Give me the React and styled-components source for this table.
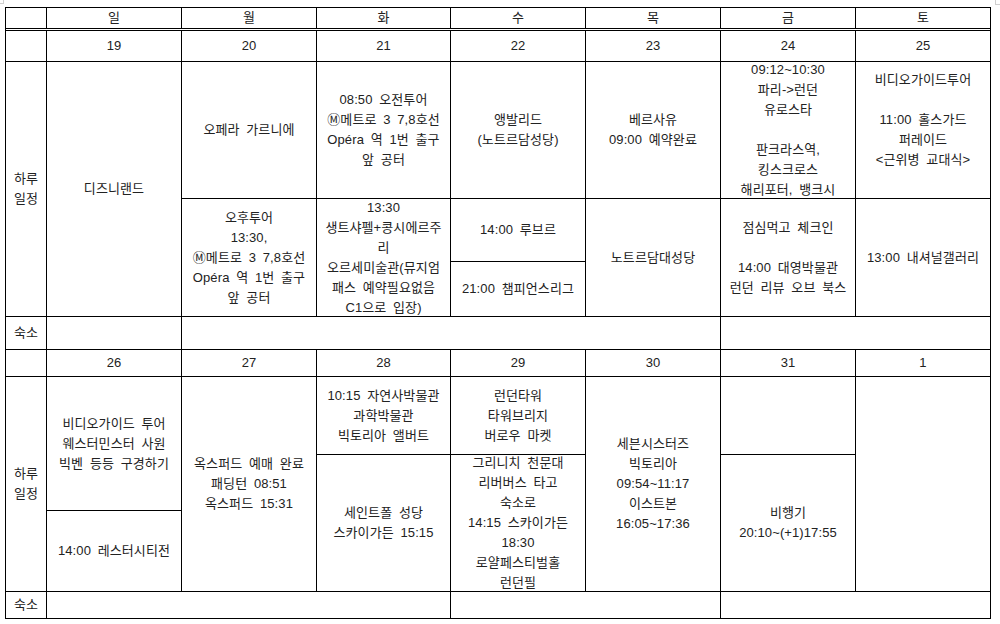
import React from "react";
import styled, { createGlobalStyle } from "styled-components";

const GlobalStyle = createGlobalStyle`
  html, body {
    margin: 0;
    padding: 0;
    background: #fff;
  }
  body {
    font-family: "Liberation Sans", "Noto Sans CJK KR", sans-serif;
    color: #222;
  }
`;

const Page = styled.div`
  position: relative;
  width: 1000px;
  height: 624px;
  padding: 7px 0 0 5px;
  box-sizing: border-box;
`;

// little page-corner marks of the word processor
const CornerMark = styled.span`
  position: absolute;
  top: 0;
  ${(p) => (p.$right ? "left: 995px;" : "left: 0;")}
  width: ${(p) => (p.$right ? "5px" : "3px")};
  height: ${(p) => (p.$right ? "4px" : "3px")};
  ${(p) =>
    p.$right
      ? "border-left: 1px solid #cfcfcf; border-bottom: 1px solid #cfcfcf;"
      : "border-right: 1px solid #cfcfcf; border-bottom: 1px solid #cfcfcf;"}
`;

const Sheet = styled.div`
  display: grid;
  grid-template-columns: 40px 134px 134px 133px 134px 134px 134px 134px;
  grid-template-rows: 20px 1px 30px 136px 62px 54px 32px 26px 77px 55px 80px 26px;
  gap: 1px;
  padding: 1px;
  background: #000;
  width: max-content;
`;

const Cell = styled.div`
  grid-column: span ${(p) => p.$cs || 1};
  grid-row: span ${(p) => p.$rs || 1};
  background: #fff;
  display: flex;
  flex-direction: column;
  align-items: center;
  justify-content: center;
  text-align: center;
  font-size: 13px;
  line-height: 20px;
  word-spacing: 3px;
  letter-spacing: 0.1px;
  white-space: nowrap;
`;

const Spacer = styled.div`
  grid-column: span 8;
  background: #fff;
`;

const Line = styled.div`
  min-height: 20px;
`;

const days = ["일", "월", "화", "수", "목", "금", "토"];
const week1 = ["19", "20", "21", "22", "23", "24", "25"];
const week2 = ["26", "27", "28", "29", "30", "31", "1"];

const Lines = ({ text }) =>
  text.map((t, i) => <Line key={i}>{t}</Line>);

const Box = ({ lines = [], cs, rs }) => (
  <Cell $cs={cs} $rs={rs}>
    <Lines text={lines} />
  </Cell>
);

const App = () => {
  return (
    <>
      <GlobalStyle />
      <Page>
        <CornerMark />
        <CornerMark $right />
        <Sheet>
          {/* 요일 */}
          <Cell />
          {days.map((d) => (
            <Cell key={d}>{d}</Cell>
          ))}
          <Spacer />

          {/* 첫째 주 */}
          <Cell />
          {week1.map((d) => (
            <Cell key={d}>{d}</Cell>
          ))}

          <Box rs={3} lines={["하루", "일정"]} />
          <Box rs={3} lines={["디즈니랜드"]} />
          <Box lines={["오페라 가르니에"]} />
          <Box
            lines={[
              "08:50 오전투어",
              "Ⓜ메트로 3 7,8호선",
              "Opéra 역 1번 출구",
              "앞 공터",
            ]}
          />
          <Box lines={["앵발리드", "(노트르담성당)"]} />
          <Box lines={["베르사유", "09:00 예약완료"]} />
          <Box
            lines={[
              "09:12~10:30",
              "파리->런던",
              "유로스타",
              "",
              "판크라스역,",
              "킹스크로스",
              "해리포터, 뱅크시",
            ]}
          />
          <Box
            lines={[
              "비디오가이드투어",
              "",
              "11:00 홀스가드",
              "퍼레이드",
              "<근위병 교대식>",
              "",
            ]}
          />

          <Box
            rs={2}
            lines={[
              "오후투어",
              "13:30,",
              "Ⓜ메트로 3 7,8호선",
              "Opéra 역 1번 출구",
              "앞 공터",
            ]}
          />
          <Box
            rs={2}
            lines={[
              "13:30",
              "생트샤펠+콩시에르주",
              "리",
              "오르세미술관(뮤지엄",
              "패스 예약필요없음",
              "C1으로 입장)",
            ]}
          />
          <Box lines={["14:00 루브르"]} />
          <Box rs={2} lines={["노트르담대성당"]} />
          <Box
            rs={2}
            lines={["점심먹고 체크인", "", "14:00 대영박물관", "런던 리뷰 오브 북스"]}
          />
          <Box rs={2} lines={["13:00 내셔널갤러리"]} />
          <Box lines={["21:00 챔피언스리그"]} />

          <Box lines={["숙소"]} />
          <Cell />
          <Cell $cs={4} />
          <Cell $cs={2} />

          {/* 둘째 주 */}
          <Cell />
          {week2.map((d) => (
            <Cell key={d}>{d}</Cell>
          ))}

          <Box rs={3} lines={["하루", "일정"]} />
          <Box
            rs={2}
            lines={["비디오가이드 투어", "웨스터민스터 사원", "빅벤 등등 구경하기"]}
          />
          <Box
            rs={3}
            lines={["옥스퍼드 예매 완료", "패딩턴 08:51", "옥스퍼드 15:31"]}
          />
          <Box lines={["10:15 자연사박물관", "과학박물관", "빅토리아 앨버트"]} />
          <Box lines={["런던타워", "타워브리지", "버로우 마켓"]} />
          <Box
            rs={3}
            lines={[
              "세븐시스터즈",
              "빅토리아",
              "09:54~11:17",
              "이스트본",
              "16:05~17:36",
            ]}
          />
          <Cell />
          <Cell $rs={3} />

          <Box rs={2} lines={["세인트폴 성당", "스카이가든 15:15"]} />
          <Box
            rs={2}
            lines={[
              "그리니치 천문대",
              "리버버스 타고",
              "숙소로",
              "14:15 스카이가든",
              "18:30",
              "로얄페스티벌홀",
              "런던필",
            ]}
          />
          <Box rs={2} lines={["비행기", "20:10~(+1)17:55"]} />
          <Box lines={["14:00 레스터시티전"]} />

          <Box lines={["숙소"]} />
          <Cell $cs={3} />
          <Cell $cs={2} />
          <Cell $cs={2} />
        </Sheet>
      </Page>
    </>
  );
};

export default App;
